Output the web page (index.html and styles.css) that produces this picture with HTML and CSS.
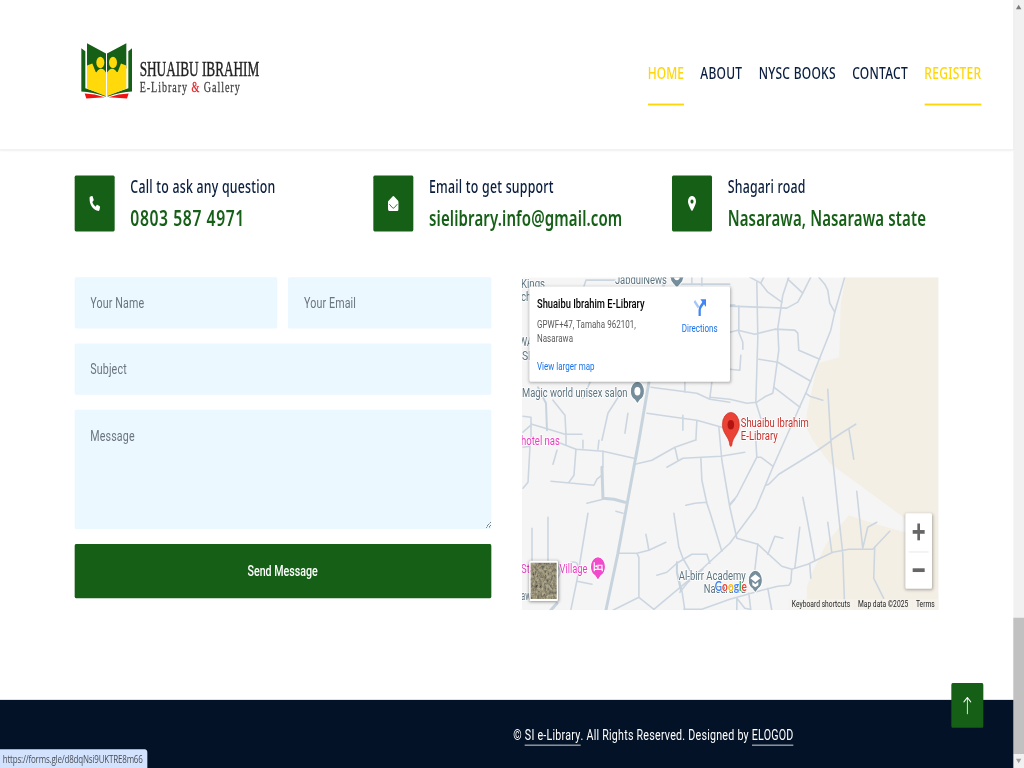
FILE: index.html
```
<!DOCTYPE html>
<html lang="en">
<head>
<meta charset="utf-8">
<title>Contact - SI e-Library</title>
<link rel="stylesheet" href="styles.css">
</head>
<body>
<div class="frame">
<div class="screen">
  <div class="page">
    <header class="header">
      <svg class="logo" viewBox="60 60 545 180" preserveAspectRatio="none">
        <path fill="#155f16" d="M64 84l12 9v111l61 21v5q-40-15-73-16zM216 84l-11 9v111l-62 21v5q40-15 73-16z"/>
        <path fill="#155f16" d="M81 69l57 31v70l-57-25zM199 69l-58 31v70l58-25z"/>
        <path fill="#ffd90a" d="M81 136l16-6 11 28 6-8q10-8 18-1l6 8v71l-57-23zM199 136l-16-6-11 28-6-8q-10-8-18-1l-7 8v71l58-23z"/>
        <ellipse cx="121" cy="127" rx="12" ry="17" fill="#ffd90a"/>
        <ellipse cx="159" cy="127" rx="12" ry="17" fill="#ffd90a"/>
        <path fill="#fff" d="M138 100h3v128h-3z" opacity=".75"/>
        <path fill="#f31212" d="M74 220q30 1 60 11l-55 4zM206 220q-30 1-60 11l55 4z"/>
        <text class="logo-name" x="239" y="168" textLength="359" lengthAdjust="spacingAndGlyphs">SHUAIBU IBRAHIM</text>
        <text class="logo-sub" x="239" y="215" textLength="303" lengthAdjust="spacingAndGlyphs">E-Library <tspan fill="#e3262b" stroke="#e3262b">&amp;</tspan> Gallery</text>
      </svg>
      <nav class="nav">
        <a class="nav-link home active">HOME</a>
        <a class="nav-link">ABOUT</a>
        <a class="nav-link">NYSC BOOKS</a>
        <a class="nav-link">CONTACT</a>
        <a class="nav-link active">REGISTER</a>
      </nav>
    </header>

    <main class="main">
      <section class="info">
        <div class="info-item">
          <div class="info-icon"><svg viewBox="0 0 512 512"><path fill="#fff" d="M164.900 24.600c-7.700-18.600-28-28.500-47.400-23.200l-88 24C12.100 30.200 0 46 0 64c0 247.400 200.600 448 448 448 18 0 33.800-12.100 38.600-29.500l24-88c5.300-19.400-4.600-39.700-23.200-47.400l-96-40c-16.300-6.800-35.200-2.100-46.300 11.600L304.700 368C234.300 334.700 177.300 277.700 144 207.300L193.300 167c13.700-11.200 18.400-30 11.600-46.300l-40-96z"/></svg></div>
          <div class="info-text"><h5>Call to ask any question</h5><h4 class="phone">0803 587 4971</h4></div>
        </div>
        <div class="info-item">
          <div class="info-icon"><svg viewBox="0 0 512 512"><path fill="#fff" d="M0 210q0-22 18-36L216 18q40-28 80 0l198 156q18 14 18 36v238q0 64-64 64H64q-64 0-64-64z"/><path fill="none" stroke="#155f16" stroke-width="34" stroke-linecap="round" d="M78 292l130 108q48 36 96 0l130-108"/></svg></div>
          <div class="info-text"><h5>Email to get support</h5><h4>sielibrary.info@gmail.com</h4></div>
        </div>
        <div class="info-item">
          <div class="info-icon"><svg viewBox="0 0 512 512"><path fill="#fff" fill-rule="evenodd" d="M282 499q-26 26-52 0C180 435 64 281 64 192a192 192 0 0 1 384 0c0 89-116 243-166 307zM256 118a74 74 0 1 0 0 148 74 74 0 0 0 0-148z"/></svg></div>
          <div class="info-text"><h5>Shagari road</h5><h4>Nasarawa, Nasarawa state</h4></div>
        </div>
      </section>

      <section class="contact">
        <form class="form">
          <div class="form-row">
            <input class="field" type="text" placeholder="Your Name">
            <input class="field" type="text" placeholder="Your Email">
          </div>
          <input class="field" type="text" placeholder="Subject">
          <textarea class="field message" placeholder="Message"></textarea>
          <button class="send" type="button">Send Message</button>
        </form>

        <div class="map">
          <svg class="map-canvas" viewBox="522 277 417 333" preserveAspectRatio="none">
            <defs>
              <filter id="terrain" x="0" y="0" width="1" height="1">
                <feTurbulence type="fractalNoise" baseFrequency=".3" numOctaves="4" seed="8"/>
                <feColorMatrix values=".8 .3 0 0 -.18  .75 .3 0 0 -.17  .55 .3 0 0 -.12  0 0 0 0 1" color-interpolation-filters="sRGB"/>
                <feComponentTransfer><feFuncR type="linear" slope=".85"/><feFuncG type="linear" slope=".85"/><feFuncB type="linear" slope=".85"/></feComponentTransfer>
              </filter>
            </defs>
            <path fill="#f5f5f5" d="M522 277h417v333H522z"/>
            <path fill="#f4efe4" d="M846 277L841 303 839.500 357 818 363 807 413 806.500 427 813 440 830 463 905 518 932 538 905 532 873 523 849 515 827 543 812 573 807 587V610H939V277z"/>
            <g class="roads">
              <path d="M845 277L835 312 831 330 806 393 785 440 773 467 756 508 730 543 703 568 654 609"/>
              <path d="M750 277L761 283 768 292 782 302M761 283L764 277"/>
              <path d="M789 277L783 295 778 328 779 350 774 387 773 393 766 396 757 402 747 403 730 399 710 397"/>
              <path d="M788 279L803 293M811 277L803 293 798 302 787 308 730 306"/>
              <path d="M757 282L758 337 756 402 761 418M819 277L825 284 828 290 830 303 835 312"/>
              <path d="M730 332L738 330 755 334 775 329 795 330 798 333 799 350 820 359"/>
              <path d="M739 306V332L743 342V349M741 355L740 370 730 369"/>
              <path d="M759 359L778 362 811 381M774 387L800 407M806 393L810 396 823 400"/>
              <path d="M828 389L831 440 838 507 843 553 845 610M831 440L843 432 856 424M849 428L851 440 854 459"/>
              <path d="M831 441L818 450 779 474 769 484 766 485M756 440L757 457 761 457 773 466M757 457L737 496 730 504"/>
              <path d="M719 427L722 460 730 507 737 538 758 544 782 566 792 569 808 564 833 552 849 549 873 549 890 531"/>
              <path d="M758 544L755 570M768 554L775 536 783 538M800 527L795 568M803 497L807 517 815 560M828 522L832 552"/>
              <path d="M857 491L863 548 868 527 877 522M875 547L874 578 884 598M810 564L811 578"/>
              <path d="M792 569L791 582 789 585 778 586 762 590 730 599 702 609H684M768 588L772 610M737 598L745 608 750 609M749 593L751 610M737 598V610"/>
              <path d="M523 447L530 446 528 482 523 488M545 440L558 442 576 449 603 451 634 458M557 450L553 464"/>
              <path d="M566 433V445M583 440V448M599 440L598 449M576 449L574 475 569 482M551 481L594 485 597 479 602 475M603 451V467"/>
              <path d="M587 503L603 499M616 511L623 513M588 513L577 580 571 609M577 581L592 584M548 517V562M532 528V562M571 562Q580 560 577 570M558 577Q563 570 556 565"/>
              <path d="M635 464L652 460 675 447 695 440M675 447L678 460M667 467L683 458 721 456 745 452"/>
              <path d="M730 505L735 499M701 458L702 480 707 503 711 515 722 551M686 505L695 503 707 502M674 513L679 547 683 558 690 570"/>
              <path d="M618 553H637L649 550 666 542M646 534L649 550M637 553L639 557V597L613 610M639 597L654 609"/>
              <path d="M657 575L667 572 677 563 687 557 692 554H707L710 563M677 562V572L682 590 685 610M703 569L688 582 680 592"/>
              <path d="M584 286L586 280H615M680 284H730M692 277V284M702 277V285M730 305H735"/>
              <path d="M523 416L531 417V443M523 432L532 424 552 430 565 434M553 400L565 415 566 434M591 380L583 398M622 391L608 413 602 440M628 413L625 433M565 434H582"/>
              <path d="M651 387L697 393 710 399 730 402M647 413L675 417 697 420 722 427M683 415V430M697 420L696 440M685 382V392M712 382L710 398"/>
            </g>
            <g class="roads wide">
              <path d="M665 277L649 382 639 440 618 553 606 610"/>
              <path d="M602 467L603 498 614 499 625 502M557 603L549 612"/>
              <path d="M538 387L546 403 547 430M677 562V572L681 590"/>
            </g>
            <g class="labels">
              <text x="521" y="288" textLength="24" lengthAdjust="spacingAndGlyphs">Kings</text>
              <text x="521" y="301" textLength="16" lengthAdjust="spacingAndGlyphs">cho</text>
              <text x="519" y="346" textLength="14" lengthAdjust="spacingAndGlyphs">WA</text>
              <text x="522" y="360" textLength="12" lengthAdjust="spacingAndGlyphs">SE</text>
              <text x="615" y="284" textLength="52" lengthAdjust="spacingAndGlyphs">JabdulNews</text>
              <text x="522" y="397" textLength="105.500" lengthAdjust="spacingAndGlyphs">Magic world unisex salon</text>
              <text x="679" y="580" textLength="67" lengthAdjust="spacingAndGlyphs">Al-birr Academy</text>
              <text x="704" y="593" textLength="42" lengthAdjust="spacingAndGlyphs">Nasarawa</text>
              <text x="521" y="600" textLength="14" lengthAdjust="spacingAndGlyphs">awa</text>
              <g class="pink">
                <text x="521" y="444.500" textLength="39" lengthAdjust="spacingAndGlyphs">hotel nas</text>
                <text x="521" y="573" textLength="14" lengthAdjust="spacingAndGlyphs">Sta</text>
                <text x="559.500" y="573" textLength="28" lengthAdjust="spacingAndGlyphs">Village</text>
              </g>
              <g class="red">
                <text x="741" y="427" textLength="68" lengthAdjust="spacingAndGlyphs">Shuaibu Ibrahim</text>
                <text x="741" y="440" textLength="37" lengthAdjust="spacingAndGlyphs">E-Library</text>
              </g>
            </g>
            <g stroke="#fff" stroke-width="1">
              <path fill="#768e9c" d="M670 275h14q0 6-3.500 9l-3.500 4-3.500-4q-3.500-3-3.500-9z"/>
              <path fill="#768e9c" d="M630.500 391a7 10 0 0 1 14 0q0 6-4 8.500l-3 4-3-4q-4-2.500-4-8.500z"/>
              <path fill="#f14acb" d="M590.500 566.500a7.500 10 0 0 1 15 0q0 6-4.500 9l-3 4.500-3-4.500q-4.500-3-4.500-9z"/>
              <path fill="#768e9c" d="M748.500 580a7 10 0 0 1 14 0q0 6-4 8.500l-3 4-3-4q-4-2.500-4-8.500z"/>
            </g>
            <ellipse cx="637.500" cy="391" rx="3" ry="4.200" fill="#fff"/>
            <ellipse cx="677" cy="276" rx="3" ry="4" fill="#fff"/>
            <path fill="none" stroke="#fff" stroke-width="1.200" d="M594.300 562v9M594.300 569h8v2M602 569v-4h-4v4"/>
            <circle cx="596.300" cy="566" r="1" fill="#fff"/>
            <path fill="#fff" d="M750.500 578l5-4 5 4-5 4zM752.500 581.500l3 2.500 3-2.500v3.500l-3 2-3-2z"/>
            <path fill="#ea4335" stroke="#c5221f" stroke-width=".6" d="M722.500 424.500a8.500 12.300 0 0 1 17 0c0 9-7 12-7.500 20.500q-1 2.500-2 0c-.5-8.500-7.500-11.500-7.500-20.500z"/>
            <ellipse cx="731" cy="424.500" rx="3.300" ry="4.700" fill="#b31412"/>
            <text class="google" x="715" y="591" textLength="32" lengthAdjust="spacingAndGlyphs"><tspan fill="#4285f4">G</tspan><tspan fill="#ea4335">o</tspan><tspan fill="#fbbc04">o</tspan><tspan fill="#4285f4">g</tspan><tspan fill="#34a853">l</tspan><tspan fill="#ea4335">e</tspan></text>
          </svg>

          <div class="card">
            <div class="card-place">
              <strong>Shuaibu Ibrahim E-Library</strong>
              <p>GPWF+47, Tamaha 962101,<br>Nasarawa</p>
              <a>View larger map</a>
            </div>
            <div class="card-dir">
              <svg viewBox="0 0 18 18" width="19" height="20"><path fill="none" stroke="#a5c5fb" stroke-width="3" d="M1.500 3l6 6.500"/><path fill="none" stroke="#4285f4" stroke-width="3.200" d="M9 18v-6q0-2 2-4l4-4"/><path fill="#4285f4" d="M10 1h8v8z"/></svg>
              <a>Directions</a>
            </div>
          </div>

          <svg class="thumb" viewBox="0 0 38 38" preserveAspectRatio="none"><path filter="url(#terrain)" fill="#6d6654" d="M0 0h38v38H0z"/></svg>
          <div class="zoom"><span class="plus"></span><span class="rule"></span><span class="minus"></span></div>
          <div class="legal"><span>Keyboard shortcuts</span><span>Map data ©2025</span><span>Terms</span></div>
        </div>
      </section>
    </main>

    <footer class="footer">
      <p class="copy">© <a>SI e-Library</a>. All Rights Reserved. Designed by <a>ELOGOD</a></p>
    </footer>
    <a class="to-top"><svg viewBox="0 0 16 16" width="20" height="20"><path fill="none" stroke="#fff" stroke-linecap="round" stroke-linejoin="round" d="M8 15V1.500M3.800 5L8 1.200 12.200 5"/></svg></a>
    <div class="status">https://forms.gle/d8dqNsi9UKTRE8m66</div>
  </div>
  <div class="scrollbar"><i class="up"></i><b class="thumb-bar"></b><i class="down"></i></div>
</div>
</div>
</body>
</html>
```
FILE: styles.css
```
* { box-sizing: border-box; }

html, body { margin: 0; background: #fff; }

.frame {
  width: 1024px;
  height: 768px;
  overflow: hidden;
}

/* 1536x823 desktop viewport fitted into a 4:3 frame */
.screen {
  width: 1536px;
  height: 823px;
  display: flex;
  transform: scale(.66667, .93317);
  transform-origin: 0 0;
  font-family: Roboto, "Liberation Sans", sans-serif;
  background: #fff;
}

.page {
  position: relative;
  width: 1520px;
  height: 823px;
  display: flex;
  flex-direction: column;
}

.header {
  height: 161px;
  flex: none;
  display: flex;
  justify-content: space-between;
  padding: 0 48px 0 120px;
  border-bottom: 1px solid #ececec;
  box-shadow: 0 1px 3px rgba(0, 0, 0, .08);
}
.logo { width: 272.5px; height: 64.3px; margin-top: 43px; overflow: visible; }
.logo-name { font: 60px "Liberation Serif", serif; fill: #222; stroke: #222; stroke-width: 1.2; }
.logo-sub { font: 42px "Liberation Serif", serif; letter-spacing: 4px; fill: #444; stroke: #444; stroke-width: .8; }

.nav { display: flex; gap: 24.5px; }
.nav-link {
  height: 113px;
  padding-top: 65.5px;
  font: 500 18px/25px "Noto Sans", "Open Sans", sans-serif;
  letter-spacing: .4px;
  color: #091e3e;
  white-space: nowrap;
}
.nav-link.home { letter-spacing: 0; }
.nav-link.active { color: #ffd60a; border-bottom: 2px solid #ffd60a; }

.main { flex: 1; padding: 27px 0 0 111.5px; }

.info { display: flex; }
.info-item { width: 448px; display: flex; gap: 24px; }
.info-icon {
  width: 60px;
  height: 60px;
  display: flex;
  align-items: center;
  justify-content: center;
  background: #155f16;
  border-radius: 2px;
}
.info-icon svg { width: 16px; height: 16px; }
.info-text { white-space: nowrap; }
h5, h4 { margin: 0; font-family: "Noto Sans", "Open Sans", sans-serif; }
h5 { font-size: 18.5px; line-height: 24px; font-weight: 500; letter-spacing: .35px; color: #091e3e; margin-bottom: 7px; }
h4 { font-size: 22.5px; line-height: 29px; font-weight: 600; letter-spacing: .2px; color: #155f16; }
.phone { font-size: 23.5px; letter-spacing: .9px; }

.contact { display: flex; gap: 46px; margin-top: 49px; }
.form { width: 625px; display: flex; flex-direction: column; gap: 16px; }
.form-row { display: flex; gap: 16px; }
.form-row .field { flex: 1; min-width: 0; }
.field {
  height: 55px;
  width: 100%;
  margin: 0;
  padding: 0 24px;
  border: 0;
  border-radius: 2px;
  background: #ebf8ff;
  font: 16px/24px Roboto, sans-serif;
  letter-spacing: .2px;
  outline: 0;
}
.field::placeholder { color: #6c757d; opacity: 1; }
.message { height: 128px; padding: 17px 24px; resize: vertical; display: block; }
.send {
  height: 58px;
  border: 0;
  border-radius: 2px;
  background: #155f16;
  color: #fff;
  font: 500 16px/24px Roboto, sans-serif;
}

.map { position: relative; width: 625px; height: 357px; overflow: hidden; }
.map-canvas { display: block; width: 100%; height: 100%; }
.roads { fill: none; stroke: #ccd6e0; stroke-width: 1.6; stroke-linejoin: round; stroke-linecap: round; }
.roads.wide { stroke-width: 3; stroke: #c8d4dd; }
.roads.wide path:last-child { stroke-width: 2; }
.labels text {
  font: 12.500px Roboto, sans-serif;
  fill: #5b737f;
  stroke: #fff;
  stroke-width: 1.6px;
  paint-order: stroke;
}
.labels .pink text { fill: #ea3bc0; }
.labels .red text { fill: #c5302c; }
.google { font: 700 14px Lato, sans-serif; stroke: #fff; stroke-width: 1.5px; paint-order: stroke; }

.card {
  position: absolute;
  left: 11px;
  top: 10px;
  width: 301px;
  height: 102px;
  display: flex;
  justify-content: space-between;
  padding: 9px 18px 9px 12px;
  background: #fff;
  border-radius: 2px;
  box-shadow: 0 1px 4px rgba(0, 0, 0, .3);
  font-size: 12px;
  white-space: nowrap;
}
.card strong { display: block; font-size: 14px; line-height: 18px; font-weight: 500; color: #000; }
.card p { margin: 5.5px 0 15px; line-height: 15px; letter-spacing: .04px; color: #5b5b5b; }
.card a { display: block; line-height: 15px; color: #1a73e8; }
.card-dir { display: flex; flex-direction: column; align-items: center; padding-top: 3px; gap: 5.5px; }

.thumb {
  position: absolute;
  left: 11px;
  top: 304px;
  width: 43px;
  height: 43px;
  border: 2px solid #fff;
  border-radius: 2px;
  box-shadow: 0 1px 4px rgba(0, 0, 0, .4);
}

.zoom {
  position: absolute;
  right: 10px;
  top: 253px;
  width: 40px;
  height: 81px;
  display: flex;
  flex-direction: column;
  align-items: center;
  justify-content: space-between;
  padding: 11px 0 18px;
  background: #fff;
  border-radius: 2px;
  box-shadow: 0 1px 4px rgba(0, 0, 0, .3);
}
.plus {
  width: 18px;
  height: 18px;
  background: linear-gradient(#666, #666) center / 18px 4px no-repeat, linear-gradient(#666, #666) center / 4px 18px no-repeat;
}
.rule { width: 30px; height: 1px; margin-bottom: 6px; background: #e6e6e6; }
.minus { width: 18px; height: 4px; background: #666; }

.legal {
  position: absolute;
  right: 0;
  bottom: 0;
  display: flex;
  gap: 1px;
  font-size: 10px;
  line-height: 12px;
  letter-spacing: .04px;
  color: #222;
  white-space: nowrap;
}
.legal span { padding: 0 5.3px; background: rgba(245, 243, 238, .8); }

.footer { height: 73px; flex: none; background: #031227; color: #fff; }
.copy { margin: 0; padding: 26px 0 0 770px; font-size: 16px; line-height: 24px; letter-spacing: .36px; white-space: nowrap; }
.copy a { display: inline-block; line-height: 21px; border-bottom: 1px solid #dee2e6; }

.to-top {
  position: absolute;
  left: 1427px;
  top: 732px;
  width: 48px;
  height: 48px;
  display: flex;
  align-items: center;
  justify-content: center;
  background: #155f16;
  border-radius: 2px;
}

.status {
  position: absolute;
  left: 0;
  bottom: 0;
  width: 221px;
  height: 20px;
  padding-left: 4px;
  background: #d3e3fd;
  border-radius: 0 4px 0 0;
  font: 12px/22px "Open Sans", sans-serif;
  letter-spacing: -.28px;
  color: #4a4f57;
  white-space: nowrap;
}

.scrollbar {
  width: 16px;
  height: 823px;
  display: flex;
  flex-direction: column;
  align-items: center;
  justify-content: space-between;
  padding: 5px 0;
  background: #f1f1f1;
}
.up, .down { border: 4px solid transparent; }
.up { border-top: 0; border-bottom: 5px solid #7a7a7a; }
.down { border-bottom: 0; border-top: 5px solid #a0a0a0; }
.thumb-bar { width: 16px; height: 146px; margin: 647px 0 0; background: #c1c1c1; }
```
